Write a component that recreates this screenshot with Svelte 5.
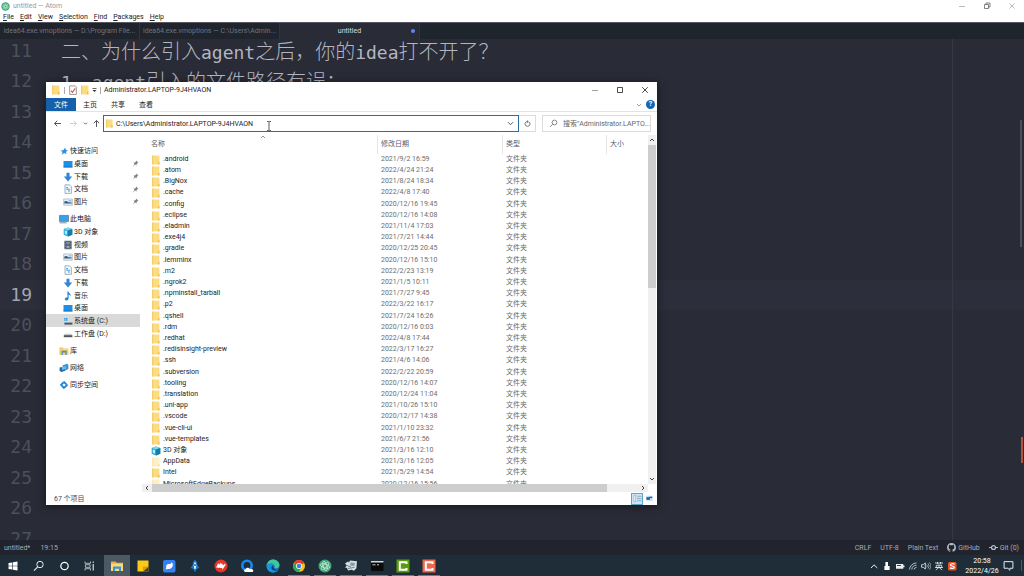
<script>
  const menus = ['File', 'Edit', 'View', 'Selection', 'Find', 'Packages', 'Help']

  const tabs = [
    { title: 'idea64.exe.vmoptions — D:\\Program File...', active: false },
    { title: 'idea64.exe.vmoptions — C:\\Users\\Admin...', active: false },
    { title: 'untitled', active: true }
  ]

  const text = {
    11: ['二、为什么引入', 'agent', '之后，你的', 'idea', '打不开了？'],
    12: ['', '1', '、', 'agent', '引入的文件路径有误：']
  }
  const lines = Array.from({ length: 17 }, (_, i) => i + 11)
  const cursorLine = 19

  const ribbon = ['主页', '共享', '查看']

  const places = [
    [
      { name: '快速访问', icon: 'star', root: true },
      { name: '桌面', icon: 'desktop', pinned: true },
      { name: '下载', icon: 'download', pinned: true },
      { name: '文档', icon: 'document', pinned: true },
      { name: '图片', icon: 'picture', pinned: true }
    ],
    [
      { name: '此电脑', icon: 'pc', root: true },
      { name: '3D 对象', icon: 'cube' },
      { name: '视频', icon: 'video' },
      { name: '图片', icon: 'picture' },
      { name: '文档', icon: 'document' },
      { name: '下载', icon: 'download' },
      { name: '音乐', icon: 'music' },
      { name: '桌面', icon: 'desktop' },
      { name: '系统盘 (C:)', icon: 'sysdrive', selected: true },
      { name: '工作盘 (D:)', icon: 'drive' }
    ],
    [{ name: '库', icon: 'library', root: true }],
    [{ name: '网络', icon: 'network', root: true }],
    [{ name: '同步空间', icon: 'sync', root: true }]
  ]

  const files = [
    ['.android', '2021/9/2 16:59'],
    ['.atom', '2022/4/24 21:24'],
    ['.BigNox', '2021/8/24 18:34'],
    ['.cache', '2022/4/8 17:40'],
    ['.config', '2020/12/16 19:45'],
    ['.eclipse', '2020/12/16 14:08'],
    ['.eladmin', '2021/11/4 17:03'],
    ['.exe4j4', '2021/7/21 14:44'],
    ['.gradle', '2020/12/25 20:45'],
    ['.lemminx', '2020/12/16 15:10'],
    ['.m2', '2022/2/23 13:19'],
    ['.ngrok2', '2021/1/5 10:11'],
    ['.npminstall_tarball', '2021/7/27 9:45'],
    ['.p2', '2022/3/22 16:17'],
    ['.qshell', '2021/7/24 16:26'],
    ['.rdm', '2020/12/16 0:03'],
    ['.redhat', '2022/4/8 17:44'],
    ['.redisinsight-preview', '2022/3/17 16:27'],
    ['.ssh', '2021/4/6 14:06'],
    ['.subversion', '2022/2/22 20:59'],
    ['.tooling', '2020/12/16 14:07'],
    ['.translation', '2020/12/24 11:04'],
    ['.uni-app', '2021/10/26 15:10'],
    ['.vscode', '2020/12/17 14:38'],
    ['.vue-cli-ui', '2021/1/10 23:32'],
    ['.vue-templates', '2021/6/7 21:56'],
    ['3D 对象', '2021/3/16 12:10', 'cube'],
    ['AppData', '2021/3/16 12:05', 'faded'],
    ['Intel', '2021/5/29 14:54'],
    ['MicrosoftEdgeBackups', '2020/12/16 15:56', 'faded']
  ]

  const apps = [
    { id: 'start', label: 'Start' },
    { id: 'search', label: 'Search' },
    { id: 'cortana', label: 'Cortana' },
    { id: 'tasks', label: 'Task view' },
    { id: 'explorer', label: 'File Explorer', active: true },
    { id: 'notes', label: 'Sticky Notes' },
    { id: 'bird', label: 'Messenger' },
    { id: 'rocket', label: 'Launcher' },
    { id: 'red', label: 'Docs' },
    { id: 'qbrowser', label: 'QQ Browser' },
    { id: 'edge', label: 'Edge' },
    { id: 'chrome', label: 'Chrome', running: true },
    { id: 'atom', label: 'Atom', running: true },
    { id: 'tool', label: 'Tool', running: true },
    { id: 'cmd', label: 'Command Prompt', running: true },
    { id: 'camgreen', label: 'Camtasia', running: true },
    { id: 'camred', label: 'Camtasia Recorder', running: true }
  ]

  const tray = ['up', 'usb', 'battery', 'wifi', 'volume', 'ime', 'sogou']

  let path = $state('C:\\Users\\Administrator.LAPTOP-9J4HVAON')
</script>

{#snippet folder(faded)}
  <svg class="icon" class:faded viewBox="0 0 9 9">
    <path d="M1 .5h6.600v8H1z" fill="#fbdc84" />
    <path d="M1 .5h1v8H1z" fill="#f3cb62" />
    <path d="M6.200 6.200h1.400v2.300H6.200z" fill="#f0c04c" />
  </svg>
{/snippet}

{#snippet placeIcon(id)}
  <svg class="icon" viewBox="0 0 10 10">
    {#if id === 'star'}
      <path d="M6.200 1.600 6.900 3.900 9 4.300 7.100 5.700 7.300 8.200 5.300 6.900 2.600 8.800 3.600 6 1.400 4.600 4.300 4.200z" fill="#2f8fdd" />
    {:else if id === 'desktop'}
      <path d="M.5 2h9v6.400h-9z" fill="#1c8fe8" />
      <path d="M.5 7.600h9v.8h-9z" fill="#0f64b0" />
    {:else if id === 'download'}
      <path d="M3.500.8h3v3.800h2.700L5 9.400.8 4.600h2.700z" fill="#2f86d6" />
    {:else if id === 'document'}
      <path d="M2 .8h4.600L8.400 2.600v6.800H2z" fill="#f3f8fc" stroke="#7d95a8" stroke-width=".7" />
      <path d="M3.300 3.600h1.600M3.300 5.300h3.600M5 7h2" stroke="#4a9bd8" stroke-width="1.100" />
    {:else if id === 'picture'}
      <path d="M.7 2h8.600v6.200H.7z" fill="#e5f0f7" stroke="#a3afb9" stroke-width=".7" />
      <path d="M1.300 6.600V4.600l2.200-.6 2 1.200 3.200.4v1z" fill="#33597c" />
      <path d="M5.600 3h2.800v1.600H5.600z" fill="#8fc4ee" />
    {:else if id === 'pc'}
      <path d="M.4 1.400h9.200v6H.4z" fill="#37a0e6" stroke="#54718a" stroke-width=".7" />
      <path d="M.6 8.800h7M5 7.400v1" stroke="#7b8f9e" stroke-width="1" />
    {:else if id === 'cube'}
      <path d="M5 .6 9.300 2v5.800L5 9.500.7 7.800V2z" fill="#26a7d8" />
      <path d="M5 .6 9.300 2 5 3.600.7 2z" fill="#7bd6ee" />
      <path d="M5 3.600 9.300 2v5.800L5 9.500z" fill="#117ea9" />
      <path d="M1.800 3.400 4 4.100v3.500l-2.200-.7z" fill="#bdebf6" />
    {:else if id === 'video'}
      <path d="M1.400.8h7.200v8.400H1.400z" fill="#3c4652" />
      <path d="M3.200 1.600h3.600v3H3.200zM3.200 5.400h3.600v3H3.200z" fill="#6e93b8" />
      <path d="M2.200 1.200v7.800M7.800 1.200v7.800" stroke="#d8dde2" stroke-width=".7" stroke-dasharray=".9 .8" />
      <path d="M4 6.200h2v1.400H4z" fill="#d7b25e" />
    {:else if id === 'music'}
      <path d="M4.400.6h1c.2 1.800 2.800 2 2.400 5-.4-1.400-1.200-1.800-2.200-2.100v4c0 1.200-.9 1.900-2 1.900S1.800 8.800 1.800 7.900s1.200-1.700 2.600-1.300z" fill="#1f86d8" />
    {:else if id === 'sysdrive'}
      <path d="M1.200 2h1.400v1.200H1.200zM3 2h1.400v1.200H3zM1.200 3.600h1.400v1.200H1.200zM3 3.600h1.400v1.200H3z" fill="#1f9be6" />
      <path d="M1.400 6.400h8v2.200h-8z" fill="#4b5560" />
      <path d="M1.400 6h8v.7h-8z" fill="#a9b3bb" />
    {:else if id === 'drive'}
      <path d="M1.800 4.800h6.600l1 1.600H.8z" fill="#c7ccd0" />
      <path d="M.8 6.200h8.600v2H.8z" fill="#4e555b" />
    {:else if id === 'library'}
      <path d="M.4 1.400h3.400l.8 1h4.800v6.400H.4z" fill="#f2c556" />
      <path d="M2.600 4.600h5v4.400H6.400V6.400H3.800V9H2.600z" fill="#3f97d4" />
      <path d="M.4 3.200h9v1H.4z" fill="#fbe08f" />
    {:else if id === 'network'}
      <path d="M3.400 2.400 8 .8l1.400 1v4.200L5.400 8z" fill="#3795d9" />
      <path d="M.6 4.600 6 3.600v4.200L2.600 9 .6 8z" fill="#1f6aa8" />
      <path d="M3 4 6.800 3v3L3 7z" fill="#70bdec" />
    {:else if id === 'sync'}
      <path d="M5 2 8 5 5 8 2 5z" fill="none" stroke="#1c83d6" stroke-width="1.800" stroke-dasharray="3.700 .5" />
    {/if}
  </svg>
{/snippet}

{#snippet appIcon(id)}
  <svg class="app-icon" viewBox="0 0 14 14">
    {#if id === 'start'}
      <path d="M2.500 4 6.300 3.400v3.300H2.500zM6.900 3.300 11.500 2.600v4.100H6.900zM2.500 7.300h3.800v3.300l-3.800-.6zM6.900 7.300h4.600v4.100l-4.600-.7z" fill="#fff" />
    {:else if id === 'search'}
      <circle cx="8" cy="5.500" r="3.200" fill="none" stroke="#e8edf0" stroke-width="1" />
      <path d="M5.700 7.900 2 11.600" stroke="#e8edf0" stroke-width="1.100" />
    {:else if id === 'cortana'}
      <circle cx="6.500" cy="7" r="3.700" fill="none" stroke="#fff" stroke-width="1.200" />
    {:else if id === 'tasks'}
      <path d="M1 2.500v1.800h5.500V2.500M1 11.500V9.700h5.500v1.800M1.400 5.700h4.700v2.600H1.400z" fill="none" stroke="#cfd6da" stroke-width=".8" />
      <path d="M9.200 2.500v1.400M9.200 5v6.500" stroke="#fff" stroke-width="1" />
    {:else if id === 'explorer'}
      <path d="M1 2.500h4.500l1 1.200H13v8.300H1z" fill="#e9b040" />
      <path d="M1 4.600h12v7.400H1z" fill="#fad978" />
      <path d="M3 7.500h8V12H9V9.800H5V12H3z" fill="#3b93d1" />
    {:else if id === 'notes'}
      <path d="M1.500 1.500h11v11h-11z" fill="#fcc913" />
      <path d="M12.500 7.500v5h-5.500z" fill="#3f3d34" />
      <path d="M7 7.500h5.500L7 12.500z" fill="#d99d0b" />
    {:else if id === 'bird'}
      <rect x="1" y="1" width="12.500" height="12.500" rx="2" fill="#3480f5" />
      <path d="M9.800 3.200c1.300 1.600 1.300 3.400.4 4.700-1 1.500-2.600 2.200-4.200 2L3.600 10.600l.6-2C3.800 6.400 5 5 6.800 5c1.400 0 2.500-.5 3-1.800z" fill="#fff" />
    {:else if id === 'rocket'}
      <path d="M7 .8c2 1.600 2.500 3.600 2.300 5.200L11.500 9 9 9.800 7 13.200 5 9.800 2.500 9l2.200-3C4.500 4.400 5 2.400 7 .8z" fill="#1c76c9" />
      <path d="M7 2.500 8.400 6 7.600 10H6.400L5.600 6z" fill="#e8f4ff" />
      <circle cx="7" cy="6" r="1" fill="#1760a8" />
    {:else if id === 'red'}
      <circle cx="7" cy="7" r="6.500" fill="#e63429" />
      <path d="M2.800 8.800 4.600 4.800v4l1.600-3 .1 3 1.600-4-.4 4 1.400-3v3l2.400-3.600" fill="none" stroke="#fff" stroke-width="1.300" />
    {:else if id === 'qbrowser'}
      <circle cx="7" cy="6.500" r="4.700" fill="none" stroke="#1988f0" stroke-width="2.600" />
      <path d="M5.500 13c-1.800-.2-2-2.600 0-2.700.5-2 3.300-2.200 4-.4 2-.2 3.800.6 3.800 1.800 0 1-.8 1.300-1.600 1.300z" fill="#fff" />
    {:else if id === 'edge'}
      <circle cx="7" cy="7" r="6.500" fill="#1876c7" />
      <path d="M.6 6.500C1.200 2.600 4 .5 7 .5c3.800 0 6.500 2.600 6.500 5.500 0 2-1.500 3.200-3.400 3.200-1.200 0-1.900-.4-1.500-1.300C9 6.500 7.800 4.600 5 4.600c-2 0-3.600.8-4.400 1.900z" fill="#43c79a" />
      <path d="M.6 6.500C2 4 6.800 3.700 7.400 6.500 4.500 6.700 4.200 10.500 8 11.500c1.800.4 3.600 0 4.800-1C11.500 12.600 9.500 13.500 7 13.500 2.600 13.500.3 9.800.6 6.500z" fill="#1497dc" />
      <path d="M7.400 6.500C5 7 4.600 10.600 8 11.500c1.800.4 3.600 0 4.800-1-2.600.8-6-.4-5.400-4z" fill="#143f78" />
    {:else if id === 'chrome'}
      <circle cx="7" cy="7" r="6" fill="#fbc116" />
      <path d="M7 7 1.800 4A6 6 0 0 1 12.200 4z" fill="#e33b2e" />
      <path d="M7 7 1.800 4A6 6 0 0 0 6.800 13L9 9z" fill="#2da94f" />
      <circle cx="7" cy="7" r="3" fill="#fff" />
      <circle cx="7" cy="7" r="2.300" fill="#3b7ded" />
    {:else if id === 'atom'}
      {@render atomMark()}
    {:else if id === 'tool'}
      <path d="M1 4.500 4 2.500 5 3.500 6 1.500l7 .8-.6 7-2.400 2.500-2.400-1L4 11.500l-1-2.500-2-.6 1.800-1.800z" fill="#d5dde2" />
      <path d="M6.500 3.500l4.500.6-.8 3-4-.6z" fill="#8598a4" />
      <path d="M4 9.500l6.500-1.200M3 6.500 7 8" stroke="#5b6d78" stroke-width=".8" fill="none" />
    {:else if id === 'cmd'}
      <path d="M1 2h12.500v10H1z" fill="#0a0b0c" />
      <path d="M1 2h12.500v1.500H1z" fill="#d5d8da" />
      <path d="M2.500 5.800h3M7 5.800h2" stroke="#c8ccd0" stroke-width="1" />
    {:else if id === 'camgreen' || id === 'camred'}
      <path d="M.5.500h13v13H.5z" fill={id === 'camgreen' ? '#5a9c10' : '#f0684c'} />
      <path d="M10.500 5V3.200H3.800v7.600h6.700V9" fill="none" stroke="#fff" stroke-width="2" />
    {/if}
  </svg>
{/snippet}

{#snippet atomMark()}
  <circle cx="7" cy="7" r="6.500" fill="#3fa577" />
  <g fill="none" stroke="#d6f2e4" stroke-width=".7">
    <ellipse cx="7" cy="7" rx="4.800" ry="1.800" transform="rotate(15 7 7)" />
    <ellipse cx="7" cy="7" rx="4.800" ry="1.800" transform="rotate(75 7 7)" />
    <ellipse cx="7" cy="7" rx="4.800" ry="1.800" transform="rotate(135 7 7)" />
  </g>
{/snippet}

{#snippet trayIcon(id)}
  <svg class="tray-icon" viewBox="0 0 10 10">
    {#if id === 'up'}
      <path d="M2 7 5 3.800 8.300 7" fill="none" stroke="#e8edf0" stroke-width="1" />
    {:else if id === 'usb'}
      <path d="M3.400 1h2.600v4h1.600V9H2.400V5h1z" fill="#fff" />
    {:else if id === 'battery'}
      <path d="M1 3h7.300v4.800H1zM8.300 4.500h1.200v1.700H8.300z" fill="#e8edf0" />
      <path d="M2 4h4v1H2z" fill="#3a4750" />
    {:else if id === 'wifi'}
      <path d="M1.500 8.500A7 7 0 0 1 8.500 2M3.800 8.500A4.600 4.600 0 0 1 8.500 4.300M6 8.500a2.300 2.300 0 0 1 2.500-2" fill="none" stroke="#c3cbd0" stroke-width=".9" />
    {:else if id === 'volume'}
      <path d="M.6 3.700h1.600L4.300 1.900v6.200L2.200 6.300H.6z" fill="none" stroke="#e8edf0" stroke-width=".8" />
      <path d="M5.600 3.600a2 2 0 0 1 0 2.900M7 2.400a4 4 0 0 1 0 5.200M8.400 1.400a5.500 5.500 0 0 1 0 7.200" fill="none" stroke="#c3cbd0" stroke-width=".7" />
    {:else if id === 'ime'}
      <path d="M1 2h8M3.500 1v2M6.500 1v2M2.300 4.200h5.400v2.200H2.300zM5 3.500v3M1 6.500h8M4.700 6.700 1.800 9M5.300 6.700 8.200 9" fill="none" stroke="#e8edf0" stroke-width=".8" />
    {:else if id === 'sogou'}
      <rect x="1" y="1" width="8.500" height="8.500" rx="1.500" fill="#ee5223" />
      <path d="M7.600 3.200C6 2.300 3.300 2.700 3.400 4c.1 1.200 4 .8 4 2.300 0 1.300-2.800 1.500-4.500.6" fill="none" stroke="#fff" stroke-width="1.200" />
    {/if}
  </svg>
{/snippet}

<div class="screen">
  <header class="titlebar">
    <svg class="logo" viewBox="0 0 14 14">{@render atomMark()}</svg>
    <span>untitled — Atom</span>
    <div class="win-buttons">
      <button aria-label="Minimize"><svg viewBox="0 0 8 8"><path d="M1 4.500h6" /></svg></button>
      <button aria-label="Restore"><svg viewBox="0 0 8 8"><path d="M1.500 2.500h4v4h-4zM3 2.500V1h4v4H5.500" stroke="#666" /></svg></button>
      <button aria-label="Close"><svg viewBox="0 0 8 8"><path d="M1.500 1.500l5 5M6.500 1.500l-5 5" /></svg></button>
    </div>
  </header>

  <nav class="menubar">
    {#each menus as menu}
      <button><u>{menu[0]}</u>{menu.slice(1)}</button>
    {/each}
  </nav>

  <div class="tabs">
    {#each tabs as tab}
      <button class="tab" class:active={tab.active}>{tab.title}</button>
    {/each}
  </div>

  <main class="editor">
    <div class="wrap-guide"></div>
    <div class="lines">
      {#each lines as n}
        <div class="line" class:current={n === cursorLine}>
          <span class="gutter">{n}</span>
          <code>{#each text[n] ?? [] as part, i}<span class:cjk={i % 2 === 0}>{part}</span>{/each}</code>
        </div>
      {/each}
    </div>
    <div class="scroll-thumb"></div>
    <div class="marker"></div>
  </main>

  <footer class="statusbar">
    <span>untitled*</span>
    <span>19:15</span>
    <div class="status-right">
      <button>CRLF</button>
      <button>UTF-8</button>
      <button>Plain Text</button>
      <button>
        <svg viewBox="0 0 16 16"><path d="M8 0C3.580 0 0 3.580 0 8c0 3.540 2.290 6.530 5.470 7.590.4.070.550-.170.550-.380 0-.190-.010-.820-.010-1.490-2.010.370-2.530-.490-2.690-.940-.090-.230-.480-.940-.820-1.130-.280-.150-.680-.520-.010-.530.630-.010 1.080.580 1.230.820.720 1.210 1.870.870 2.330.660.070-.520.280-.870.510-1.070-1.780-.200-3.640-.890-3.640-3.950 0-.870.310-1.590.820-2.150-.080-.200-.360-1.020.080-2.120 0 0 .670-.210 2.200.820a7.600 7.600 0 0 1 4 0c1.530-1.040 2.200-.820 2.200-.820.440 1.100.160 1.920.080 2.120.510.560.820 1.270.820 2.150 0 3.070-1.870 3.750-3.650 3.950.290.250.540.730.540 1.480 0 1.070-.010 1.930-.010 2.200 0 .210.150.460.550.380A8 8 0 0 0 16 8c0-4.420-3.580-8-8-8z" fill="#b6b9c6" /></svg>
        GitHub
      </button>
      <button>
        <svg viewBox="0 0 16 16"><circle cx="8" cy="8" r="3.500" fill="none" stroke="#b6b9c6" stroke-width="2.200" /><path d="M0 8h4.500M11.500 8H16" stroke="#b6b9c6" stroke-width="2.200" /></svg>
        Git (0)
      </button>
    </div>
  </footer>

  <footer class="taskbar">
    {#each apps as app}
      <button class="app" class:active={app.active} class:running={app.running} aria-label={app.label}>
        {@render appIcon(app.id)}
      </button>
    {/each}
    <div class="tray">
      {#each tray as id}
        <button aria-label={id}>{@render trayIcon(id)}</button>
      {/each}
      <div class="clock">
        <span>20:58</span>
        <span>2022/4/26</span>
      </div>
      <button class="notify" aria-label="Notifications">
        <svg viewBox="0 0 10 10"><path d="M1 1.500h8v6H6.200v1.800L4.400 7.500H1z" fill="none" stroke="#e8edf0" stroke-width=".9" /></svg>
      </button>
    </div>
  </footer>

  <section class="explorer">
    <div class="ex-title">
      {@render folder(false)}
      <i></i>
      <svg class="icon" viewBox="0 0 9 9"><path d="M1.500.8h5l1 1v6.700h-6z" fill="#fff" stroke="#8a8f94" stroke-width=".8" /><path d="M2.700 5 4 6.600 6.500 3" fill="none" stroke="#d0583a" stroke-width="1" /></svg>
      {@render folder(false)}
      <svg class="more" viewBox="0 0 5 6"><path d="M.5 1h4v.7h-4zM.5 3h4l-2 2z" fill="#333" /></svg>
      <i></i>
      <span>Administrator.LAPTOP-9J4HVAON</span>
      <div class="win-buttons dark">
        <button aria-label="Minimize window"><svg viewBox="0 0 8 8"><path d="M1 4.500h6" stroke="#888" /></svg></button>
        <button aria-label="Maximize window"><svg viewBox="0 0 8 8"><path d="M1.500 1.500h5v5h-5z" /></svg></button>
        <button aria-label="Close window"><svg viewBox="0 0 8 8"><path d="M1.200 1.200l5.600 5.600M6.800 1.200l-5.600 5.600" /></svg></button>
      </div>
    </div>

    <div class="ribbon">
      <button class="file">文件</button>
      {#each ribbon as item}
        <button>{item}</button>
      {/each}
      <div class="help">
        <svg viewBox="0 0 6 6"><path d="M1 2l2 2 2-2" fill="none" stroke="#888" stroke-width=".8" /></svg>
        <button aria-label="Help">?</button>
      </div>
    </div>

    <div class="address-row">
      <button aria-label="Back"><svg viewBox="0 0 9 9"><path d="M8 4.500H1.500M4.200 1.800 1.500 4.500l2.700 2.700" stroke="#555" /></svg></button>
      <button aria-label="Forward"><svg viewBox="0 0 9 9"><path d="M1 4.500h6.500M4.800 1.800 7.500 4.500 4.800 7.200" stroke="#d0d0d0" /></svg></button>
      <button class="narrow" aria-label="Recent"><svg viewBox="0 0 9 9"><path d="M3 3.700l1.500 1.500L6 3.700" stroke="#666" /></svg></button>
      <button class="up" aria-label="Up"><svg viewBox="0 0 9 9"><path d="M4.500 8V1.500M1.800 4.200l2.700-2.700 2.700 2.700" stroke="#555" /></svg></button>
      <label class="address">
        {@render folder(false)}
        <input aria-label="Address" bind:value={path} />
        <svg viewBox="0 0 9 9"><path d="M2 3.200l2.500 2.500L7 3.200" stroke="#555" /></svg>
      </label>
      <button class="refresh" aria-label="Refresh"><svg viewBox="0 0 9 9"><path d="M2.600 3.200A2.500 2.500 0 1 0 6.400 3.200M3 2.800h2.600M4.600 1.400v2.400" stroke="#777" /></svg></button>
      <label class="search">
        <svg viewBox="0 0 9 9"><circle cx="5.500" cy="3.500" r="2.400" stroke="#888" /><path d="M3.700 5.300 1.200 7.800" stroke="#888" /></svg>
        <input aria-label="Search" placeholder={'搜索"Administrator.LAPTO...'} />
      </label>
    </div>

    <div class="ex-body">
      <nav class="places">
        {#each places as group}
          <ul>
            {#each group as place}
              <li>
                <a href="#top" class:root={place.root} class:selected={place.selected}>
                  {@render placeIcon(place.icon)}
                  <span>{place.name}</span>
                  {#if place.pinned}
                    <svg class="pin" viewBox="0 0 7 7"><path d="M4.200.6 6.400 2.800 5.600 3.100 4.600 4.300 4.500 5.600 3.200 4.600.7 6.500 2.500 3.900 1.500 2.600 2.900 2.500 4 1.500z" fill="#7d858b" /></svg>
                  {/if}
                </a>
              </li>
            {/each}
          </ul>
        {/each}
      </nav>

      <div class="list">
        <div class="rows">
          <table>
            <thead>
              <tr>
                <th class="name">名称<svg class="sort" viewBox="0 0 6 4"><path d="M1 3l2-2 2 2" fill="none" stroke="#777" stroke-width=".8" /></svg></th>
                <th class="date">修改日期</th>
                <th class="type">类型</th>
                <th>大小</th>
              </tr>
            </thead>
            <tbody>
              {#each files as [name, date, icon]}
                <tr>
                  <td>
                    <div class="file-name">
                      {#if icon === 'cube'}
                        {@render placeIcon('cube')}
                      {:else}
                        {@render folder(icon === 'faded')}
                      {/if}
                      {name}
                    </div>
                  </td>
                  <td>{date}</td>
                  <td>文件夹</td>
                  <td></td>
                </tr>
              {/each}
            </tbody>
          </table>
        </div>
        <div class="vscroll">
          <svg viewBox="0 0 8 8"><path d="M2 5l2-2 2 2" /></svg>
          <div class="thumb"></div>
          <svg viewBox="0 0 8 8"><path d="M2 3l2 2 2-2" /></svg>
        </div>
        <div class="hscroll">
          <svg viewBox="0 0 8 8"><path d="M5 2L3 4l2 2" /></svg>
          <div class="thumb"></div>
          <svg viewBox="0 0 8 8"><path d="M3 2l2 2-2 2" /></svg>
        </div>
      </div>
    </div>

    <div class="ex-status">
      <span>67 个项目</span>
      <div class="views">
        <button class="on" aria-label="Details view"><svg viewBox="0 0 10 10"><path d="M1 1.500h2v7H1z" fill="#fff" stroke="#7693a8" stroke-width=".6" /><path d="M4.500 2.500h5M4.500 5h5M4.500 7.500h5" stroke="#7693a8" stroke-width=".8" /></svg></button>
        <button aria-label="Large icons"><svg viewBox="0 0 10 10"><path d="M1.500 2h7v5.500h-7z" fill="#bcdcf2" /><path d="M1.500 3.500h4v3h-4zM5 3h3v1.500H5z" fill="#2b5c86" /></svg></button>
      </div>
    </div>
  </section>

  <svg class="ibeam" viewBox="0 0 6 10"><path d="M1 .5h1.500L3 1l.5-.5H5M3 1v8M1 9.500h1.500L3 9l.5.5H5" fill="none" stroke="#333" stroke-width=".8" /></svg>
</div>

<style>
  :global(body) {
    margin: 0;
  }

  .screen {
    position: relative;
    display: flex;
    flex-direction: column;
    height: 100vh;
    overflow: hidden;
    background: #292b36;
    color: #222;
    font: 7px/10px Roboto, "Noto Sans CJK SC", sans-serif;
  }

  button,
  input {
    margin: 0;
    padding: 0;
    border: 0;
    background: none;
    color: inherit;
    font: inherit;
  }

  svg {
    display: block;
    flex: none;
  }

  .titlebar {
    display: flex;
    align-items: center;
    flex: none;
    height: 12px;
    padding-left: 1px;
    gap: 3px;
    background: #fff;
    color: #999;
  }

  .logo {
    width: 9px;
    height: 9px;
  }

  .win-buttons {
    display: flex;
    margin-left: auto;
  }

  .win-buttons button {
    display: flex;
    justify-content: center;
    width: 25px;
  }

  .win-buttons svg {
    width: 8px;
    height: 8px;
    fill: none;
    stroke: #aaa;
    stroke-width: 0.8;
  }

  .win-buttons.dark svg {
    stroke: #222;
  }

  .menubar {
    display: flex;
    flex: none;
    height: 10px;
    padding-left: 3px;
    gap: 6px;
    border-bottom: 1px solid #55565e;
    background: #fff;
  }

  .tabs {
    display: flex;
    flex: none;
    height: 16px;
    background: #1f252d;
  }

  .tab {
    position: relative;
    flex: 0 1 140px;
    border-right: 1px solid #2f343e;
    background: #20242d;
    color: #6f7480;
    white-space: nowrap;
  }

  .tab.active {
    background: #292b36;
    color: #d7dae0;
  }

  .tab.active::after {
    content: '';
    position: absolute;
    top: 6px;
    right: 4px;
    width: 4px;
    height: 4px;
    border-radius: 50%;
    background: #568af2;
  }

  .editor {
    position: relative;
    flex: 1;
    min-height: 0;
    overflow: hidden;
  }

  .wrap-guide {
    position: absolute;
    top: 0;
    bottom: 0;
    left: 952px;
    width: 1px;
    background: #363944;
  }

  .lines {
    margin-top: -3px;
  }

  .line {
    display: flex;
    height: 30px;
    color: #b3b6c0;
    font: 18px/30px "DejaVu Sans Mono", "Noto Sans CJK SC", monospace;
  }

  .line:nth-child(even) {
    height: 31px;
  }

  .gutter {
    width: 32px;
    margin-right: 29px;
    color: #4c505e;
    text-align: right;
  }

  .current {
    background: #2c2f3b;
  }

  .current .gutter {
    color: #a2a6b2;
  }

  code {
    font: inherit;
    white-space: nowrap;
  }

  .cjk {
    font-family: "Noto Sans CJK SC", sans-serif;
    font-size: 20px;
    font-weight: 300;
  }

  .scroll-thumb,
  .marker {
    position: absolute;
    top: 81px;
    right: 2px;
    width: 2px;
    height: 127px;
    background: #4b4e5b;
  }

  .marker {
    top: 398px;
    right: 1px;
    height: 26px;
    background: #b5523f;
  }

  .statusbar {
    display: flex;
    align-items: center;
    flex: none;
    height: 15px;
    padding: 0 5px 0 4px;
    gap: 10px;
    background: #21232d;
    color: #a9acb8;
  }

  .status-right {
    display: flex;
    margin-left: auto;
    gap: 9px;
  }

  .status-right button {
    display: flex;
    align-items: center;
    gap: 2px;
  }

  .status-right svg {
    width: 9px;
    height: 9px;
  }

  .taskbar {
    display: flex;
    flex: none;
    height: 21px;
    background: #1e2d37;
    color: #fff;
  }

  .app {
    display: flex;
    align-items: center;
    justify-content: center;
    width: 26px;
  }

  .app.active {
    background: #4c5862;
  }

  .app.running {
    background: linear-gradient(#6c7b86, #6c7b86) center bottom / 22px 1px no-repeat;
  }

  .app-icon {
    width: 14px;
    height: 14px;
  }

  .tray {
    display: flex;
    align-items: center;
    margin-left: auto;
  }

  .tray button {
    display: flex;
    justify-content: center;
    width: 13px;
  }

  .tray-icon {
    width: 10px;
    height: 10px;
  }

  .clock {
    display: flex;
    flex-direction: column;
    align-items: center;
    width: 48px;
  }

  .tray .notify {
    width: 16px;
    margin-right: 2px;
    padding-right: 10px;
    border-right: 1px solid #4d5963;
  }

  .notify svg {
    width: 11px;
    height: 11px;
  }

  .explorer {
    position: absolute;
    top: 82px;
    left: 46px;
    display: flex;
    flex-direction: column;
    width: 611px;
    height: 423px;
    background: #fff;
    box-shadow: 0 1px 8px rgba(0, 0, 0, 0.5);
  }

  .icon {
    width: 10px;
    height: 10px;
  }

  .faded {
    opacity: 0.45;
  }

  .ex-title {
    display: flex;
    align-items: center;
    flex: none;
    height: 16px;
    padding-left: 5px;
    gap: 2px;
  }

  .ex-title i {
    width: 1px;
    height: 7px;
    margin: 0 1px;
    background: #aaa;
  }

  .more {
    width: 5px;
    height: 6px;
  }

  .ribbon {
    display: flex;
    flex: none;
    height: 13px;
    border-bottom: 1px solid #e2e3e4;
  }

  .ribbon > button {
    width: 28px;
  }

  .ribbon .file {
    width: 30px;
    background: #1460ab;
    color: #fff;
  }

  .help {
    display: flex;
    align-items: center;
    margin-left: auto;
    padding-right: 2px;
    gap: 4px;
  }

  .help svg {
    width: 6px;
    height: 6px;
  }

  .help button {
    width: 9px;
    height: 9px;
    border-radius: 50%;
    background: #1566b5;
    color: #fff;
    font-weight: 700;
    line-height: 9px;
  }

  .address-row {
    display: flex;
    align-items: center;
    flex: none;
    height: 23px;
    padding: 0 6px 0 3px;
  }

  .address-row button {
    display: flex;
    align-items: center;
    justify-content: center;
    width: 16px;
  }

  .address-row .narrow {
    width: 9px;
  }

  .address-row .up {
    width: 13px;
  }

  .address-row svg {
    width: 9px;
    height: 9px;
    fill: none;
  }

  .address {
    display: flex;
    align-items: center;
    flex: 1;
    box-sizing: border-box;
    height: 17px;
    padding: 0 3px 0 1px;
    gap: 2px;
    border: 1px solid #2a6f9f;
  }

  .address input,
  .search input {
    flex: 1;
    min-width: 0;
    outline: 0;
  }

  .address-row .refresh {
    box-sizing: border-box;
    width: 17px;
    height: 17px;
    border: 1px solid #dcdcdc;
    border-left: 0;
  }

  .search {
    display: flex;
    align-items: center;
    box-sizing: border-box;
    width: 109px;
    height: 17px;
    margin-left: 6px;
    padding-left: 6px;
    gap: 5px;
    border: 1px solid #dcdcdc;
  }

  .search input::placeholder {
    color: #666;
    opacity: 1;
  }

  .ex-body {
    display: flex;
    flex: 1;
    min-height: 0;
  }

  .places {
    width: 94px;
    margin-right: 2px;
    padding-top: 9px;
  }

  ul {
    margin: 0 0 4px;
    padding: 0;
    list-style: none;
  }

  .places a {
    display: flex;
    align-items: center;
    height: 13px;
    padding: 0 1px 0 17px;
    gap: 1px;
    color: inherit;
    text-decoration: none;
  }

  li:nth-child(4n) a {
    height: 12px;
  }

  .places .root {
    padding-left: 13px;
  }

  .places .selected {
    background: #d9d9d9;
  }

  .pin {
    width: 7px;
    height: 7px;
    margin-left: auto;
  }

  .list {
    display: grid;
    flex: 1;
    grid-template: minmax(0, 1fr) 8px / minmax(0, 1fr) 8px;
    padding-right: 1px;
  }

  .rows {
    overflow: hidden;
  }

  table {
    width: 100%;
    border-spacing: 0;
    table-layout: fixed;
  }

  th {
    position: relative;
    height: 17px;
    padding: 0 0 2px 3px;
    border-right: 1px solid #e6e6e6;
    color: #56616d;
    font-weight: 400;
    text-align: left;
  }

  th:last-child {
    border-right: 0;
  }

  th.name {
    width: 226px;
    padding-left: 9px;
  }

  .date {
    width: 121px;
  }

  .type {
    width: 100px;
  }

  .sort {
    position: absolute;
    top: 0;
    left: 118px;
    width: 6px;
    height: 4px;
  }

  td {
    height: 11px;
    padding: 0 0 0 3px;
    color: #6d6d6d;
    line-height: 11px;
    white-space: nowrap;
  }

  tr:nth-child(5n) td {
    height: 12px;
  }

  td:first-child {
    padding-left: 9px;
    color: #222;
  }

  .file-name {
    display: flex;
    align-items: center;
    gap: 2px;
  }

  .vscroll,
  .hscroll {
    display: flex;
    background: #f0f0f0;
  }

  .vscroll {
    flex-direction: column;
  }

  .vscroll svg,
  .hscroll svg {
    width: 8px;
    height: 8px;
    padding: 1px 0;
    fill: none;
    stroke: #444;
  }

  .hscroll svg {
    padding: 0 1px;
  }

  .thumb {
    background: #cdcdcd;
  }

  .vscroll .thumb {
    height: 41%;
    margin-bottom: auto;
  }

  .hscroll .thumb {
    width: 90%;
    margin-right: auto;
  }

  .ex-status {
    display: flex;
    align-items: center;
    flex: none;
    height: 13px;
    padding-left: 8px;
    color: #3b4a66;
  }

  .views {
    display: flex;
    margin-left: auto;
    padding-right: 2px;
  }

  .views button {
    display: flex;
    align-items: center;
    justify-content: center;
    box-sizing: border-box;
    width: 12px;
    height: 12px;
  }

  .views .on {
    border: 1px solid #5ba6cf;
    background: #cfe6f5;
  }

  .views svg {
    width: 9px;
    height: 9px;
  }

  .ibeam {
    position: absolute;
    top: 121px;
    left: 266px;
    width: 6px;
    height: 10px;
  }
</style>
